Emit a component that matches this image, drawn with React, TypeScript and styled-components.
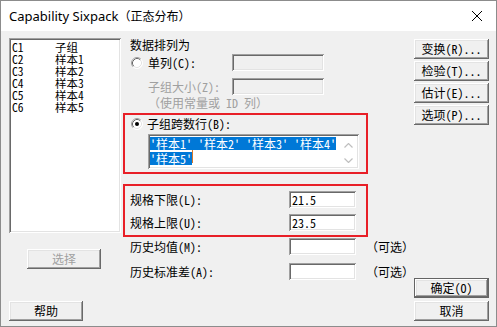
import React from 'react';
import styled, { createGlobalStyle, css } from 'styled-components';

const GlobalStyle = createGlobalStyle`
  html, body {
    margin: 0;
    padding: 0;
    background: #ffffff;
  }
  * {
    box-sizing: border-box;
  }
`;

const UI_FONT = `"Noto Sans Mono CJK SC", "Noto Sans CJK SC", "Liberation Mono", monospace`;

const sunken = css`
  box-shadow: inset 1px 1px #a0a0a0, inset -1px -1px #ffffff, inset 2px 2px #696969, inset -2px -2px #e3e3e3;
`;

const Window = styled.div`
  width: 497px;
  height: 327px;
  border: 1px solid #8c8c8c;
  display: flex;
  flex-direction: column;
  background: #f0f0f0;
  font-family: ${UI_FONT};
  font-size: 12px;
  color: #000;
`;

const TitleBar = styled.div`
  height: 30px;
  flex: none;
  background: #ffffff;
  display: flex;
  align-items: center;
  justify-content: space-between;
  padding: 0 14px 0 8px;
  font-family: "Noto Sans", "Noto Sans CJK SC", sans-serif;
  font-size: 13px;
`;

const TitleCjk = styled.span`
  font-family: "Noto Sans CJK SC", sans-serif;
  font-size: 12px;
`;

const Body = styled.div`
  flex: 1;
  display: flex;
  padding: 7px 7px 5px 8px;
`;

const LeftCol = styled.div`
  width: 112px;
  display: flex;
  flex-direction: column;
`;

const ListBox = styled.div`
  height: 195px;
  background: #ffffff;
  ${sunken};
  padding: 3px 0 0 3px;
`;

const ListRow = styled.div`
  display: grid;
  grid-template-columns: 43px 1fr;
  height: 12px;
`;

const ListCell = styled.div`
  height: 12px;
  line-height: 12px;
  font-size: 11.5px;
  white-space: nowrap;
`;

const Button = styled.button<{ $disabled?: boolean; $default?: boolean }>`
  width: 75px;
  height: 20px;
  padding: 0;
  background: #f0f0f0;
  font-family: ${UI_FONT};
  font-size: 12px;
  line-height: 16px;
  color: ${p => (p.$disabled ? '#a0a0a0' : '#000')};
  border: ${p => (p.$default ? '1px solid #646464' : 'none')};
  box-shadow: inset -1px -1px #696969, inset 1px 1px #ffffff, inset -2px -2px #a0a0a0, inset 2px 2px #e3e3e3;
  white-space: nowrap;
`;

const SelectButton = styled(Button)`
  width: 74px;
  margin: 16px 0 0 18px;
`;

const HelpButton = styled(Button)`
  width: 74px;
  margin-top: auto;
`;

const MiddleCol = styled.div`
  width: 291px;
  margin-left: 2px;
  display: flex;
  flex-direction: column;
`;

const Heading = styled.div`
  padding-left: 7px;
  line-height: 14px;
  height: 14px;
`;

const RadioRow = styled.div<{ $indent: number; $top: number }>`
  display: flex;
  align-items: center;
  height: 17px;
  margin-top: ${p => p.$top}px;
  padding-left: ${p => p.$indent}px;
`;

const RadioLabel = styled.span<{ $width?: number; $gap?: number }>`
  margin-left: ${p => p.$gap ?? 5}px;
  width: ${p => (p.$width ? `${p.$width}px` : 'auto')};
  white-space: nowrap;
`;

const GrayLabel = styled.span`
  width: 84px;
  color: #a0a0a0;
  white-space: nowrap;
`;

const Note = styled.div`
  margin-top: 1px;
  padding-left: 25px;
  line-height: 14px;
  height: 14px;
  color: #a0a0a0;
  white-space: nowrap;
`;

const Field = styled.div<{ $width: number; $disabled?: boolean }>`
  width: ${p => p.$width}px;
  height: 17px;
  background: ${p => (p.$disabled ? '#f0f0f0' : '#ffffff')};
  ${sunken};
  padding: 0 0 0 3px;
  line-height: 17px;
  white-space: nowrap;
`;

const RedBox = styled.div<{ $top: number; $pad: string }>`
  width: 245px;
  margin-top: ${p => p.$top}px;
  border: 2px solid #e81f27;
  padding: ${p => p.$pad};
  display: flex;
  flex-direction: column;
`;

const TextArea = styled.div`
  width: 211px;
  height: 35px;
  margin: 2px 0 0 17px;
  background: #ffffff;
  ${sunken};
  display: flex;
  padding: 3px 2px 2px 2px;
`;

const TextLines = styled.div`
  flex: 1;
  display: flex;
  flex-direction: column;
  align-items: flex-start;
`;

const Sel = styled.span`
  display: inline-block;
  height: 13px;
  line-height: 13px;
  background: #0078d7;
  color: #ffffff;
  white-space: pre;
`;

const Caret = styled.span`
  display: inline-block;
  width: 1px;
  height: 13px;
  background: #d97a2b;
  vertical-align: top;
`;

const ScrollBar = styled.div`
  width: 17px;
  display: flex;
  flex-direction: column;
  justify-content: space-between;
  align-items: center;
  padding: 6px 0 4px;
`;

const FormRow = styled.div<{ $top?: number }>`
  display: flex;
  align-items: center;
  height: 17px;
  margin-top: ${p => p.$top ?? 0}px;
`;

const RowLabel = styled.span`
  width: 159px;
  white-space: nowrap;
`;

const Optional = styled.span`
  margin-left: 10px;
  white-space: nowrap;
`;

const OuterRows = styled.div`
  padding-left: 7px;
  display: flex;
  flex-direction: column;
`;

const RightCol = styled.div`
  width: 75px;
  display: flex;
  flex-direction: column;
  gap: 2px;
  padding-top: 1px;
`;

const BottomGroup = styled.div`
  margin-top: auto;
  display: flex;
  flex-direction: column;
  gap: 3px;
`;

function Radio({ checked }: { checked?: boolean }) {
  return (
    <svg width="12" height="12" viewBox="0 0 12 12">
      <circle cx="6" cy="6" r="5.5" fill="#ffffff" />
      <path d="M2.11 9.89 A5.5 5.5 0 0 1 9.89 2.11" fill="none" stroke="#a0a0a0" />
      <path d="M9.89 2.11 A5.5 5.5 0 0 1 2.11 9.89" fill="none" stroke="#ffffff" />
      <path d="M2.82 9.18 A4.5 4.5 0 0 1 9.18 2.82" fill="none" stroke="#696969" />
      <path d="M9.18 2.82 A4.5 4.5 0 0 1 2.82 9.18" fill="none" stroke="#e3e3e3" />
      {checked && <circle cx="6" cy="6" r="2" fill="#000000" />}
    </svg>
  );
}

function Chevron({ up }: { up?: boolean }) {
  return (
    <svg width="9" height="5" viewBox="0 0 9 5">
      <path d={up ? 'M0.5 4.5 L4.5 0.5 L8.5 4.5' : 'M0.5 0.5 L4.5 4.5 L8.5 0.5'} fill="none" stroke="#bfbfbf" strokeWidth="1.2" />
    </svg>
  );
}

const columns = [
  ['C1', '子组'],
  ['C2', '样本1'],
  ['C3', '样本2'],
  ['C4', '样本3'],
  ['C5', '样本4'],
  ['C6', '样本5'],
];

export default function App() {
  return (
    <>
      <GlobalStyle />
      <Window>
        <TitleBar>
          <span>
            Capability Sixpack<TitleCjk>（正态分布）</TitleCjk>
          </span>
          <svg width="10" height="10" viewBox="0 0 10 10">
            <path d="M0 0 L10 10 M10 0 L0 10" stroke="#000" strokeWidth="1" />
          </svg>
        </TitleBar>
        <Body>
          <LeftCol>
            <ListBox>
              {columns.map(([id, name]) => (
                <ListRow key={id}>
                  <ListCell>{id}</ListCell>
                  <ListCell>{name}</ListCell>
                </ListRow>
              ))}
            </ListBox>
            <SelectButton $disabled>选择</SelectButton>
            <HelpButton>帮助</HelpButton>
          </LeftCol>

          <MiddleCol>
            <Heading>数据排列为</Heading>
            <RadioRow $indent={8} $top={2}>
              <Radio />
              <RadioLabel $width={84}>单列(C):</RadioLabel>
              <Field $width={92} $disabled />
            </RadioRow>
            <RadioRow $indent={25} $top={7}>
              <GrayLabel>子组大小(Z):</GrayLabel>
              <Field $width={92} $disabled />
            </RadioRow>
            <Note>（使用常量或 ID 列）</Note>

            <RedBox $top={3} $pad="0 7px 3px 6px">
              <RadioRow $indent={0} $top={0}>
                <Radio checked />
                <RadioLabel $gap={4}>子组跨数行(B):</RadioLabel>
              </RadioRow>
              <TextArea>
                <TextLines>
                  <Sel>'样本1' '样本2' '样本3' '样本4'</Sel>
                  <span>
                    <Sel>'样本5'</Sel>
                    <Caret />
                  </span>
                </TextLines>
                <ScrollBar>
                  <Chevron up />
                  <Chevron />
                </ScrollBar>
              </TextArea>
            </RedBox>

            <RedBox $top={10} $pad="5px 10px 4px 5px">
              <FormRow>
                <RowLabel>规格下限(L):</RowLabel>
                <Field $width={67}>21.5</Field>
              </FormRow>
              <FormRow $top={6}>
                <RowLabel>规格上限(U):</RowLabel>
                <Field $width={67}>23.5</Field>
              </FormRow>
            </RedBox>

            <OuterRows>
              <FormRow $top={1}>
                <RowLabel>历史均值(M):</RowLabel>
                <Field $width={67} />
                <Optional>（可选）</Optional>
              </FormRow>
              <FormRow $top={8}>
                <RowLabel>历史标准差(A):</RowLabel>
                <Field $width={67} />
                <Optional>（可选）</Optional>
              </FormRow>
            </OuterRows>
          </MiddleCol>

          <RightCol>
            <Button>变换(R)...</Button>
            <Button>检验(T)...</Button>
            <Button>估计(E)...</Button>
            <Button>选项(P)...</Button>
            <BottomGroup>
              <Button $default>确定(O)</Button>
              <Button>取消</Button>
            </BottomGroup>
          </RightCol>
        </Body>
      </Window>
    </>
  );
}
